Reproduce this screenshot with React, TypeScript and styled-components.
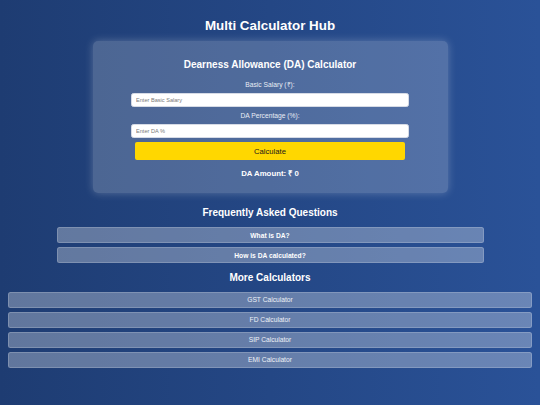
import React, { useState } from 'react';
import styled, { createGlobalStyle } from 'styled-components';

const GlobalStyle = createGlobalStyle`
  html, body {
    margin: 0;
    padding: 0;
  }
  body {
    font-family: "Liberation Sans", Arial, sans-serif;
    background: linear-gradient(to right, #1e3c72, #2a5298);
    min-height: 405px;
    color: #fff;
  }
`;

const Page = styled.div`
  min-height: 405px;
  box-sizing: border-box;
  padding: 8px;
  display: flex;
  flex-direction: column;
  align-items: center;
`;

const Title = styled.h1`
  margin: 10px 0 8px;
  font-size: 13.4px;
  line-height: 15px;
  font-weight: 700;
  color: #fff;
`;

const Card = styled.section`
  width: 355px;
  box-sizing: border-box;
  padding: 18px 0 15px;
  background: rgba(255, 255, 255, 0.2);
  border-radius: 5px;
  box-shadow: 0 0 8px rgba(255, 255, 255, 0.25);
  display: flex;
  flex-direction: column;
  align-items: center;
`;

const CardTitle = styled.h2`
  margin: 0 0 10.5px;
  font-size: 10px;
  line-height: 11px;
  font-weight: 700;
`;

const Label = styled.label`
  font-size: 6.7px;
  line-height: 8px;
  color: #e9edf5;
  margin-bottom: 4.5px;
`;

const Input = styled.input`
  width: 278px;
  height: 14px;
  box-sizing: border-box;
  margin: 0 0 ${(p: { $gap: number }) => p.$gap}px;
  padding: 0 4px;
  border: 1px solid #d6dbe6;
  border-radius: 2.5px;
  background: #fff;
  font-family: "Liberation Sans", Arial, sans-serif;
  font-size: 5.6px;
  outline: none;
  &::placeholder {
    color: #7a7a7a;
  }
`;

const CalcButton = styled.button`
  width: 270px;
  height: 18px;
  margin: 0 0 9px;
  border: none;
  border-radius: 2px;
  background: #ffd700;
  color: #1a1a1a;
  font-family: "Liberation Sans", Arial, sans-serif;
  font-size: 7.7px;
  cursor: pointer;
`;

const Result = styled.h3`
  margin: 0;
  font-size: 7.8px;
  line-height: 9px;
  font-weight: 700;
`;

const SectionTitle = styled.h2<{ $top: number }>`
  margin: ${(p) => p.$top}px 0 8px;
  font-size: 10px;
  line-height: 12px;
  font-weight: 700;
`;

const List = styled.div<{ $width: string }>`
  width: ${(p) => p.$width};
  display: flex;
  flex-direction: column;
  gap: 4px;
`;

const FaqItem = styled.button`
  height: 16px;
  border: 1px solid rgba(255, 255, 255, 0.18);
  border-radius: 2.5px;
  background: rgba(255, 255, 255, 0.3);
  color: #fff;
  font-family: "Liberation Sans", Arial, sans-serif;
  font-size: 6.7px;
  font-weight: 700;
  padding: 0;
  cursor: pointer;
`;

const CalcLink = styled.a`
  height: 16px;
  box-sizing: border-box;
  border: 1px solid rgba(255, 255, 255, 0.18);
  border-radius: 2.5px;
  background: rgba(255, 255, 255, 0.3);
  color: #eef1f7;
  font-size: 6.7px;
  display: flex;
  align-items: center;
  justify-content: center;
  text-decoration: none;
  cursor: pointer;
`;

const faqs = ['What is DA?', 'How is DA calculated?'];
const calculators = ['GST Calculator', 'FD Calculator', 'SIP Calculator', 'EMI Calculator'];

export default function App() {
  const [salary, setSalary] = useState('');
  const [percent, setPercent] = useState('');
  const [amount, setAmount] = useState(0);

  const calculate = () => {
    const s = parseFloat(salary) || 0;
    const p = parseFloat(percent) || 0;
    setAmount((s * p) / 100);
  };

  return (
    <>
      <GlobalStyle />
      <Page>
        <Title>Multi Calculator Hub</Title>
        <Card>
          <CardTitle>Dearness Allowance (DA) Calculator</CardTitle>
          <Label htmlFor="salary">Basic Salary (₹):</Label>
          <Input
            id="salary"
            $gap={4.5}
            placeholder="Enter Basic Salary"
            value={salary}
            onChange={(e) => setSalary(e.target.value)}
          />
          <Label htmlFor="percent">DA Percentage (%):</Label>
          <Input
            id="percent"
            $gap={4}
            placeholder="Enter DA %"
            value={percent}
            onChange={(e) => setPercent(e.target.value)}
          />
          <CalcButton onClick={calculate}>Calculate</CalcButton>
          <Result>DA Amount: ₹ {amount}</Result>
        </Card>

        <SectionTitle $top={14}>Frequently Asked Questions</SectionTitle>
        <List $width="427px">
          {faqs.map((q) => (
            <FaqItem key={q}>{q}</FaqItem>
          ))}
        </List>

        <SectionTitle $top={8.5}>More Calculators</SectionTitle>
        <List $width="100%">
          {calculators.map((c) => (
            <CalcLink key={c}>{c}</CalcLink>
          ))}
        </List>
      </Page>
    </>
  );
}
